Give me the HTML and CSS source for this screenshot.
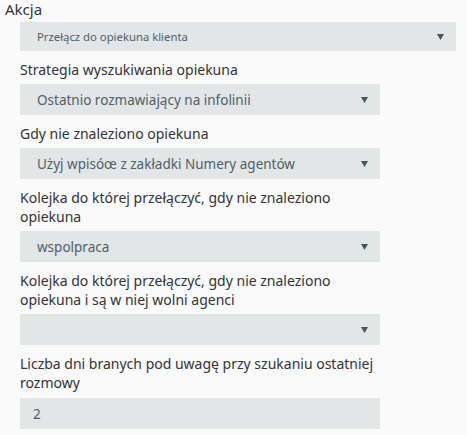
FILE: index.html
```html
<!DOCTYPE html>
<html lang="pl">
<head>
    <meta charset="UTF-8">
    <meta name="viewport" content="width=device-width, initial-scale=1.0">
    <title>Akcja</title>
    <link rel="stylesheet" href="styles.css">
</head>
<body>

<form class="action-form">
    <label class="top-label" for="action">Akcja</label>
    <div class="select-wrap select-wide">
        <select id="action" class="select-small">
            <option>Przełącz do opiekuna klienta</option>
        </select>
        <svg class="arrow" width="7" height="6" viewBox="0 0 7 6"><path d="M0 0H7L3.5 6Z"/></svg>
    </div>

    <!-- ustawienia opiekuna -->
    <div class="group">
        <div class="field">
            <label for="strategy">Strategia wyszukiwania opiekuna</label>
            <div class="select-wrap">
                <select id="strategy">
                    <option>Ostatnio rozmawiający na infolinii</option>
                </select>
                <svg class="arrow" width="7" height="6" viewBox="0 0 7 6"><path d="M0 0H7L3.5 6Z"/></svg>
            </div>
        </div>

        <div class="field">
            <label for="fallback">Gdy nie znaleziono opiekuna</label>
            <div class="select-wrap">
                <select id="fallback">
                    <option>Użyj wpisóœ z zakładki Numery agentów</option>
                </select>
                <svg class="arrow" width="7" height="6" viewBox="0 0 7 6"><path d="M0 0H7L3.5 6Z"/></svg>
            </div>
        </div>

        <div class="field">
            <label for="queue">Kolejka do której przełączyć, gdy nie znaleziono opiekuna</label>
            <div class="select-wrap">
                <select id="queue">
                    <option>wspolpraca</option>
                </select>
                <svg class="arrow" width="7" height="6" viewBox="0 0 7 6"><path d="M0 0H7L3.5 6Z"/></svg>
            </div>
        </div>

        <div class="field">
            <label for="queueFree">Kolejka do której przełączyć, gdy nie znaleziono opiekuna i są w niej wolni agenci</label>
            <div class="select-wrap">
                <select id="queueFree">
                    <option></option>
                </select>
                <svg class="arrow" width="7" height="6" viewBox="0 0 7 6"><path d="M0 0H7L3.5 6Z"/></svg>
            </div>
        </div>

        <div class="field">
            <label for="days">Liczba dni branych pod uwagę przy szukaniu ostatniej rozmowy</label>
            <input type="text" id="days" value="2">
        </div>
    </div>
</form>

</body>
</html>
```

FILE: styles.css
```css
body {
    font-family: "Noto Sans", "Open Sans", Arial, sans-serif;
    margin: 0;
    background-color: #fafafa;
    color: #333;
}
label {
    display: block;
    font-size: 14px;
    line-height: 19px;
}
.top-label {
    font-size: 15px;
    line-height: 19px;
    padding-left: 5px;
}
.select-wrap {
    position: relative;
    width: 360px;
}
.select-wide {
    width: 436px;
    margin: 3px 0 0 20px;
}
select, input {
    display: block;
    box-sizing: border-box;
    width: 100%;
    height: 31px;
    margin: 0;
    padding: 0 30px 0 17px;
    border: none;
    border-radius: 0;
    background-color: #e2e6e7;
    color: #4f5e67;
    font-family: "Noto Sans", "Open Sans", Arial, sans-serif;
    font-size: 13.5px;
    appearance: none;
    -webkit-appearance: none;
    outline: none;
}
.select-small {
    height: 29px;
    font-size: 11.3px;
}
input {
    padding-left: 13px;
}
.arrow {
    position: absolute;
    right: 12px;
    top: 50%;
    margin-top: -3px;
    fill: #45545e;
}
.group {
    margin-left: 20px;
    width: 360px;
}
.field {
    margin-top: 9px;
}
.field select, .field input {
    margin-top: 5px;
}
.field:last-child input {
    margin-top: 6px;
}
```
